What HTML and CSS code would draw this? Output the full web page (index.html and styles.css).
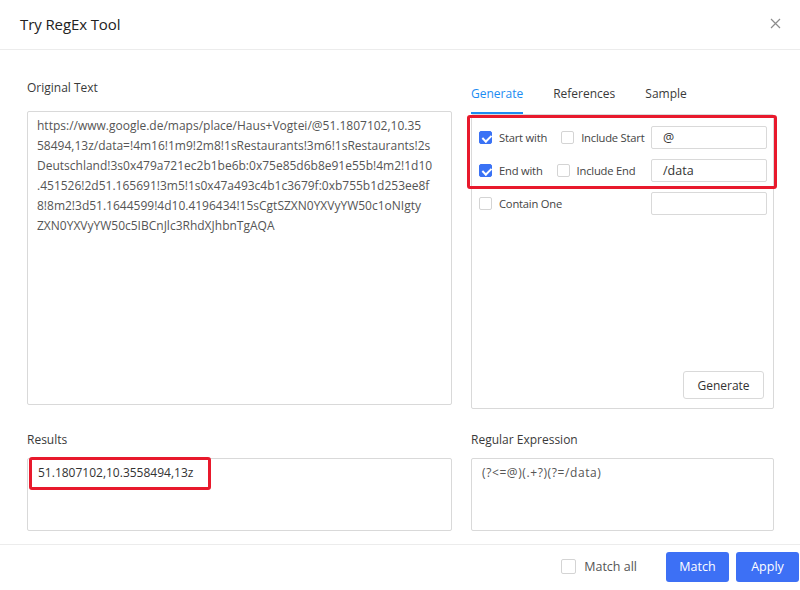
FILE: index.html
```html
<!DOCTYPE html>
<html lang="en">
<head>
<meta charset="utf-8">
<title>Try RegEx Tool</title>
<link rel="stylesheet" href="styles.css">
</head>
<body>
<div class="modal">
  <header class="head">
    <h1 class="title">Try RegEx Tool</h1>
    <button class="close" aria-label="Close">
      <svg width="11" height="11" viewBox="0 0 11 11"><path d="M1 1L10 10M10 1L1 10" stroke="#8c8c8c" stroke-width="1.2" fill="none"/></svg>
    </button>
  </header>

  <main class="body">
    <section class="cell">
      <div class="label label-top">Original Text</div>
      <div class="box box-original"><div class="mono-lines">https://www.google.de/maps/place/Haus+Vogtei/@51.1807102,10.35
58494,13z/data=!4m16!1m9!2m8!1sRestaurants!3m6!1sRestaurants!2s
Deutschland!3s0x479a721ec2b1be6b:0x75e85d6b8e91e55b!4m2!1d10
.451526!2d51.165691!3m5!1s0x47a493c4b1c3679f:0xb755b1d253ee8f
8!8m2!3d51.1644599!4d10.4196434!15sCgtSZXN0YXVyYW50c1oNIgty
ZXN0YXVyYW50c5IBCnJlc3RhdXJhbnTgAQA</div></div>
    </section>

    <section class="cell">
      <nav class="tabs">
        <span class="tab active">Generate</span>
        <span class="tab">References</span>
        <span class="tab">Sample</span>
      </nav>
      <div class="panel">
        <div class="highlight hl-options"></div>
        <div class="row">
          <div class="opts">
            <label class="opt"><span class="cb checked"></span>Start with</label>
            <label class="opt"><span class="cb"></span>Include Start</label>
          </div>
          <div class="input">@</div>
        </div>
        <div class="row">
          <div class="opts">
            <label class="opt"><span class="cb checked"></span>End with</label>
            <label class="opt"><span class="cb"></span>Include End</label>
          </div>
          <div class="input">/data</div>
        </div>
        <div class="row">
          <div class="opts">
            <label class="opt"><span class="cb"></span>Contain One</label>
          </div>
          <div class="input"></div>
        </div>
        <button class="btn btn-default">Generate</button>
      </div>
    </section>

    <section class="cell">
      <div class="label">Results</div>
      <div class="box box-small results">
        <span class="result-text">51.1807102,10.3558494,13z</span>
        <div class="highlight hl-result"></div>
      </div>
    </section>

    <section class="cell">
      <div class="label">Regular Expression</div>
      <div class="box box-small regex">(?&lt;=@)(.+?)(?=/data)</div>
    </section>
  </main>

  <footer class="foot">
    <label class="opt match-all"><span class="cb cb-lg"></span>Match all</label>
    <button class="btn btn-primary">Match</button>
    <button class="btn btn-primary">Apply</button>
  </footer>
</div>
</body>
</html>
```

FILE: styles.css
```css
* { box-sizing: border-box; }
html, body { margin: 0; padding: 0; background: #fff; }
body {
  font-family: "Open Sans", "Noto Sans", "Liberation Sans", sans-serif;
  font-size: 12px;
  color: #333;
}
.modal {
  width: 800px;
  height: 590px;
  display: flex;
  flex-direction: column;
  overflow: hidden;
}
.head {
  height: 50px;
  flex: none;
  display: flex;
  align-items: center;
  justify-content: space-between;
  padding: 0 18px 2px 20px;
  border-bottom: 1px solid #ececec;
}
.title {
  margin: 0;
  font-size: 15px;
  font-weight: 400;
  color: #222;
  letter-spacing: -0.1px;
}
.close {
  border: 0;
  background: none;
  padding: 0;
  width: 14px;
  height: 14px;
  display: flex;
  align-items: center;
  justify-content: center;
}
.body {
  flex: 1;
  display: grid;
  grid-template-columns: 425px 303px;
  column-gap: 19px;
  row-gap: 21px;
  align-items: start;
  align-content: start;
  padding: 28px 26px 0 27px;
}
.cell { display: flex; flex-direction: column; }
.label {
  line-height: 20px;
  color: #3a3a3a;
  margin-bottom: 8px;
}
.label-top { margin-bottom: 13px; }
.box {
  border: 1px solid #d9d9d9;
  border-radius: 2px;
  background: #fff;
  color: #555;
  position: relative;
}
.box-original {
  height: 294px;
  padding: 4px 9px;
}
.mono-lines {
  white-space: pre;
  line-height: 20px;
}
.box-small {
  height: 73px;
  padding: 4px 9px;
  line-height: 20px;
}
.results .result-text { color: #333; padding-left: 1px; }
.regex { font-size: 12px; letter-spacing: 0.6px; padding-left: 10px; }

.tabs {
  display: flex;
  gap: 30px;
  height: 36px;
  padding-top: 1px;
}
.tab {
  line-height: 20px;
  padding-top: 5px;
  color: #3a3a3a;
  position: relative;
}
.tab.active { color: #1c8cf2; }
.tab.active::after {
  content: "";
  position: absolute;
  left: 0;
  right: 0;
  bottom: 0;
  height: 2px;
  background: #1c8cf2;
}
.panel {
  position: relative;
  height: 295px;
  border: 1px solid #d9d9d9;
  border-radius: 2px;
  padding: 11px 6px 9px 6px;
  display: flex;
  flex-direction: column;
  gap: 10px;
}
.row {
  display: flex;
  align-items: center;
  height: 23px;
}
.opts {
  flex: 1;
  min-width: 0;
  display: flex;
  gap: 14px;
  padding-left: 1px;
}
.opt {
  display: flex;
  align-items: center;
  gap: 7px;
  color: #444;
  font-size: 11.2px;
  letter-spacing: -0.2px;
  white-space: nowrap;
}
.cb {
  width: 13px;
  height: 13px;
  border: 1px solid #d4d4d4;
  border-radius: 2px;
  background: #fff;
  position: relative;
  flex: none;
}
.cb.checked {
  background: #3a72f5;
  border-color: #3a72f5;
}
.cb.checked::after {
  content: "";
  position: absolute;
  left: 3.5px;
  top: 1px;
  width: 3.5px;
  height: 7px;
  border: solid #fff;
  border-width: 0 2px 2px 0;
  transform: rotate(45deg);
}
.cb-lg { width: 15px; height: 15px; }
.input {
  width: 116px;
  flex: none;
  height: 23px;
  border: 1px solid #d9d9d9;
  border-radius: 2px;
  padding: 0 11px;
  line-height: 21px;
  color: #333;
  font-size: 12.5px;
}
.btn {
  font-family: inherit;
  font-size: 12px;
  border-radius: 3px;
  cursor: pointer;
}
.btn-default {
  margin-top: auto;
  align-self: flex-end;
  margin-right: 3px;
  width: 81px;
  height: 28px;
  border: 1px solid #d9d9d9;
  background: #fff;
  color: #333;
}
.btn-primary {
  width: 63px;
  height: 30px;
  border: 0;
  background: #3d70f5;
  color: #fff;
  font-size: 12.5px;
}
.highlight {
  position: absolute;
  border: 3px solid #e8192c;
  border-radius: 3px;
  pointer-events: none;
}
.hl-options {
  left: -5px;
  top: 0px;
  width: 310px;
  height: 74px;
}
.hl-result {
  left: 1px;
  top: -2px;
  width: 182px;
  height: 33px;
}
.foot {
  height: 46px;
  flex: none;
  border-top: 1px solid #ececec;
  display: flex;
  align-items: center;
  justify-content: flex-end;
  gap: 7px;
  padding: 0 1px 2px 0;
}
.match-all {
  margin-right: 22px;
  gap: 8px;
  font-size: 12.5px;
  letter-spacing: 0;
  color: #555;
}
```
